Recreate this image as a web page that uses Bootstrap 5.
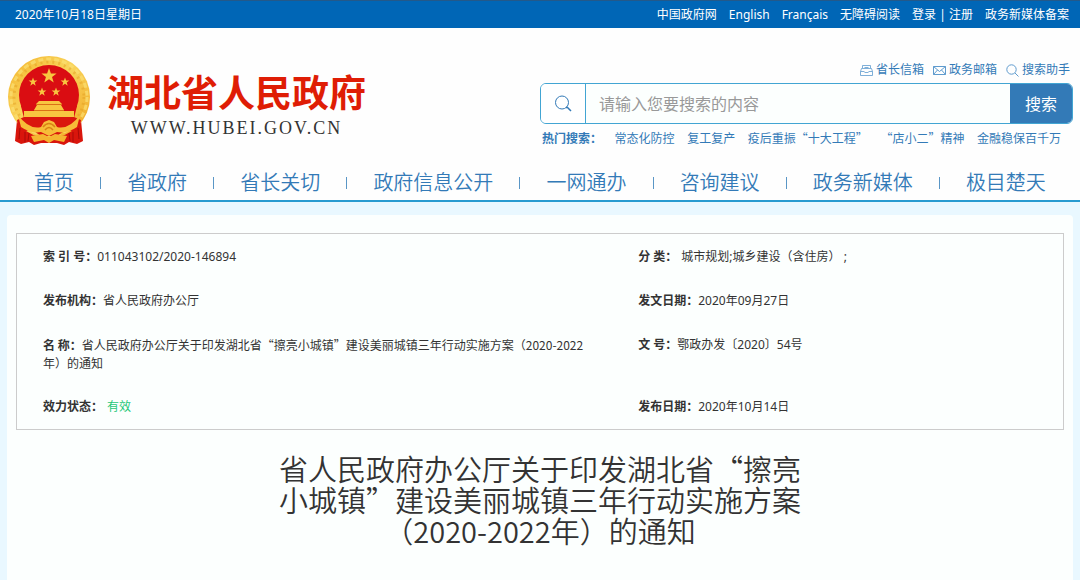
<!DOCTYPE html>
<html lang="zh-CN">
<head>
<meta charset="utf-8">
<meta name="viewport" content="width=device-width, initial-scale=1">
<title>湖北省人民政府</title>
<link href="https://cdn.jsdelivr.net/npm/bootstrap@5.3.0/dist/css/bootstrap.min.css" rel="stylesheet">
<style>
  body { font-family: "Noto Sans", "Noto Sans CJK SC", sans-serif; font-size: 12px; line-height: 18px; color: #333; background: #e9f8ff; }
  a { color: #337ab7; text-decoration: none; }
  a:hover { text-decoration: underline; }
  .cjk { font-family: "Noto Sans CJK SC", sans-serif; }
  .topbar { background: #0066b6; border-top: 1px solid #23598a; padding: 5px 11px 4px 15px; color: #fff; }
  .topbar a { color: #fff; }
  .topbar nav { gap: 12px; }
  .masthead { background: #fefefe; padding: 28px 0 19px; }
  .emblem { width: 84px; height: 90px; margin-left: 7px; flex: none; }
  .brand { margin-left: 16px; padding-top: 8px; }
  .brand-name { font-size: 37px; line-height: 46px; font-weight: 700; color: #df1d05; }
  .brand-url { font-family: "Liberation Serif", serif; font-size: 18px; line-height: 24px; color: #333; letter-spacing: 2px; }
  .tools { padding-right: 7px; }
  .quick { gap: 9px; padding: 5px 3px 4px 0; }
  .quick svg { width: 13px; height: 13px; margin-right: 3px; fill: none; stroke: #5f9bce; }
  .search { border: 1px solid #42a5d3; border-radius: 6px; overflow: hidden; height: 41px; }
  .search label { width: 45px; border-right: 1px solid #42a5d3; }
  .search input { font-size: 16px; padding: 0 13px; border: 0; border-radius: 0; background: #fcfffe; }
  .search input::placeholder { color: #999; }
  .search .btn { font-size: 16px; width: 62px; padding: 0; border: 0; border-radius: 0; background: #337ab7; color: #fff; }
  .hot { padding: 5px 12px 0 2px; color: #337ab7; }
  .mainnav { background: #fefefe; border-bottom: 2px solid #289bd0; padding: 0 34px; font-size: 20px; line-height: 34px; font-weight: 350; }
  .mainnav i { width: 1px; height: 12px; background: #5a96c6; }
  .panel { margin: 13px 7px 0; padding: 18px 9px 30px; background: #fcfffe; border-radius: 4px 4px 0 0; }
  .info { border: 1px solid #ccc; margin: 0; padding-top: 1px; }
  .info > div { padding: 13px 26px; }
  .info .wide { width: 57%; padding-right: 24px; }
  .info .slim { width: 43%; padding-left: 25px; }
  .info dt, .info dd { display: inline; margin: 0; }
  .info .gap-before { margin-left: 4px; }
  .valid { color: #1fc777; }
  .doc-title { font-size: 29px; line-height: 31px; font-weight: 350; margin: 23px auto 0; max-width: 530px; }
</style>
</head>
<body class="d-flex flex-column min-vh-100">
  <div class="topbar d-flex justify-content-between">
    <span>2020年10月18日星期日</span>
    <nav class="d-flex">
      <a href="#">中国政府网</a>
      <a href="#">English</a>
      <a href="#">Français</a>
      <a href="#">无障碍阅读</a>
      <span><a href="#">登录</a> | <a href="#">注册</a></span>
      <a href="#">政务新媒体备案</a>
    </nav>
  </div>

  <header class="masthead d-flex align-items-start">
    <div class="col-6 d-flex align-items-center">
      <svg class="emblem" viewBox="0 0 84 90" aria-hidden="true">
        <defs>
          <linearGradient id="gold" x1="0" y1="0" x2="1" y2="1">
            <stop offset="0" stop-color="#f4b52c"/><stop offset=".45" stop-color="#f9d45c"/><stop offset="1" stop-color="#f0a51f"/>
          </linearGradient>
          <path id="star" d="M0-10 2.4-3.2 9.5-3.1 3.8 1.2 5.9 8.1 0 4 -5.9 8.1 -3.8 1.2 -9.5-3.1 -2.4-3.2Z"/>
        </defs>
        <path d="M10 64 20 68H64L74 64 76 85 70 88 62 86 57 89 50 87H34L27 89 22 86 14 88 8 85Z" fill="#d9150c"/>
        <circle cx="42" cy="41" r="41" fill="url(#gold)"/>
        <circle cx="42" cy="41" r="35" fill="none" stroke="#e09c20" stroke-width="3" stroke-dasharray="2 4" opacity=".45"/>
        <circle cx="42" cy="41" r="38" fill="none" stroke="#fbdf74" stroke-width="3" stroke-dasharray="5 3" opacity=".7"/>
        <ellipse cx="42" cy="39" rx="30" ry="30" fill="#da0d12"/>
        <path d="M14 50H70L66 66H18Z" fill="#da0d12"/>
        <g fill="#f8c640">
          <use href="#star" transform="translate(42 20) scale(.8)"/>
          <use href="#star" transform="translate(26 26) scale(.46)"/>
          <use href="#star" transform="translate(58 26) scale(.46)"/>
          <use href="#star" transform="translate(35 36) scale(.46)"/>
          <use href="#star" transform="translate(49 36) scale(.46)"/>
          <path d="M32 45H52L55 48H29ZM30 49H54L57 54H27ZM17 55H67V61H17Z"/>
        </g>
        <path d="M29 48.500H55M27 54.500H57" stroke="#d98b18" stroke-width=".8"/>
        <path d="M10 64 17 61H67L74 64 72 78 60 73 50 80H34L24 73 12 78Z" fill="#da170d"/>
        <path d="M11 59Q22 74 34 71L37 66 42 64 47 66 50 71Q62 74 73 59L70 71Q60 78 50 76L42 80 34 76Q24 78 14 71Z" fill="#f7bd38"/>
        <path d="M36 71Q42 64 48 71M38 74Q42 69 46 74" fill="none" stroke="#d98316" stroke-width="1.500"/>
        <path d="M24 80 36 78 42 81 48 78 60 80 57 86 47 84 42 87 37 84 27 86Z" fill="#f5b530"/>
        <path d="M13 72 12 83M18 76V86M22 77 21 85M71 72 72 83M66 76V86M62 77 63 85" stroke="#a90b08"/>
      </svg>
      <div class="brand text-center">
        <div class="brand-name">湖北省人民政府</div>
        <div class="brand-url">WWW.HUBEI.GOV.CN</div>
      </div>
    </div>

    <div class="col-6 tools">
      <div class="quick d-flex justify-content-end">
        <a class="d-flex align-items-center" href="#"><svg viewBox="0 0 13 13" aria-hidden="true"><path d="M2.500 4V1.500H10.500V4M4.500 3.500H8.500M1.500 4.500H11.500L12.500 7.500V11.500H.5V7.500ZM.5 7.500H4.500M8.500 7.500H12.500M4.500 8.500H8.500" opacity=".8"/></svg>省长信箱</a>
        <a class="d-flex align-items-center" href="#"><svg viewBox="0 0 13 13" aria-hidden="true"><path d="M.5 2.500H12.500V10.500H.5ZM.5 2.500 6.500 7.500 12.500 2.500M.5 10.500 4.500 6M12.500 10.500 8.500 6"/></svg>政务邮箱</a>
        <a class="d-flex align-items-center" href="#"><svg viewBox="0 0 13 13" aria-hidden="true"><circle cx="5.500" cy="5.500" r="4.700"/><path d="M9 9 12.500 12.500"/></svg>搜索助手</a>
      </div>
      <form class="search d-flex" role="search">
        <label for="q" class="d-flex flex-shrink-0 align-items-center justify-content-center bg-white">
          <svg width="18" height="18" viewBox="0 0 18 18" fill="none" stroke="#337ab7" aria-label="搜索"><circle cx="8" cy="7.500" r="6.500"/><path d="M12 12.500 13.500 12.500 17 16" stroke-width="1.500"/></svg>
        </label>
        <input id="q" type="text" class="form-control shadow-none" placeholder="请输入您要搜索的内容">
        <button type="button" class="btn flex-shrink-0">搜索</button>
      </form>
      <div class="hot cjk d-flex justify-content-between text-nowrap">
        <b>热门搜索：</b>
        <a href="#">常态化防控</a>
        <a href="#">复工复产</a>
        <a href="#">疫后重振“十大工程”</a>
        <a href="#">“店小二”精神</a>
        <a href="#">金融稳保百千万</a>
      </div>
    </div>
  </header>

  <nav class="mainnav d-flex justify-content-between align-items-center text-nowrap">
    <a href="#">首页</a><i></i>
    <a href="#">省政府</a><i></i>
    <a href="#">省长关切</a><i></i>
    <a href="#">政府信息公开</a><i></i>
    <a href="#">一网通办</a><i></i>
    <a href="#">咨询建议</a><i></i>
    <a href="#">政务新媒体</a><i></i>
    <a href="#">极目楚天</a>
  </nav>

  <main class="panel flex-grow-1">
    <dl class="info d-flex flex-wrap">
      <div class="wide"><dt>索 引 号：</dt><dd>011043102/2020-146894</dd></div>
      <div class="slim"><dt>分 类：</dt><dd class="gap-before">城市规划;城乡建设（含住房） ;</dd></div>
      <div class="wide"><dt>发布机构：</dt><dd>省人民政府办公厅</dd></div>
      <div class="slim"><dt>发文日期：</dt><dd>2020年09月27日</dd></div>
      <div class="wide cjk"><dt>名 称：</dt><dd>省人民政府办公厅关于印发湖北省“擦亮小城镇”建设美丽城镇三年行动实施方案（2020-2022年）的通知</dd></div>
      <div class="slim"><dt>文 号：</dt><dd>鄂政办发〔2020〕54号</dd></div>
      <div class="wide"><dt>效力状态：</dt><dd class="valid gap-before">有效</dd></div>
      <div class="slim"><dt>发布日期：</dt><dd>2020年10月14日</dd></div>
    </dl>
    <h1 class="doc-title cjk text-center">省人民政府办公厅关于印发湖北省“擦亮小城镇”建设美丽城镇三年行动实施方案（2020-2022年）的通知</h1>
  </main>
<script src="https://cdn.jsdelivr.net/npm/bootstrap@5.3.0/dist/js/bootstrap.bundle.min.js"></script>
</body>
</html>
